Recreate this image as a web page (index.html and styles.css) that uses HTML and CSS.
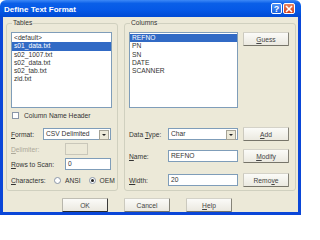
FILE: index.html
```html
<!DOCTYPE html>
<html lang="en">
<head>
    <meta charset="UTF-8">
    <title>Define Text Format</title>
    <link rel="stylesheet" href="styles.css">
</head>
<body>
    <div class="window">
        <div class="titlebar">
            <span class="title">Define Text Format</span>
            <div class="tb-buttons">
                <span class="tb-btn help">?</span>
                <span class="tb-btn close">
                    <svg width="8" height="8" viewBox="0 0 8 8"><path d="M1 1 L7 7 M7 1 L1 7" stroke="#fff" stroke-width="1.6"/></svg>
                </span>
            </div>
        </div>
        <div class="client">
            <div class="groups">
                <fieldset class="group tables">
                    <legend>Tables</legend>
                    <ul class="listbox">
                        <li>&lt;default&gt;</li>
                        <li class="sel">s01_data.txt</li>
                        <li>s02_1007.txt</li>
                        <li>s02_data.txt</li>
                        <li>s02_tab.txt</li>
                        <li>zid.txt</li>
                    </ul>
                    <div class="check"><span class="box"></span>Column Name Header</div>
                    <div class="row first">
                        <span class="lbl"><u>F</u>ormat:</span>
                        <div class="combo fmt">CSV Delimited<span class="arrow"></span></div>
                    </div>
                    <div class="row">
                        <span class="lbl off"><u>D</u>elimiter:</span>
                        <div class="input delim"></div>
                    </div>
                    <div class="row">
                        <span class="lbl"><u>R</u>ows to Scan:</span>
                        <div class="input rows">0</div>
                    </div>
                    <div class="row chars">
                        <span class="lbl"><u>C</u>haracters:</span>
                        <span class="radio"></span><span class="rtext">ANSI</span>
                        <span class="radio on"></span><span class="rtext">OEM</span>
                    </div>
                </fieldset>
                <fieldset class="group columns">
                    <legend>Columns</legend>
                    <div class="rrow top">
                        <ul class="listbox cols">
                            <li class="sel">REFNO</li>
                            <li>PN</li>
                            <li>SN</li>
                            <li>DATE</li>
                            <li>SCANNER</li>
                        </ul>
                        <button class="button"><u>G</u>uess</button>
                    </div>
                    <div class="rrow dtype">
                        <span class="lbl">Data <u>T</u>ype:</span>
                        <div class="combo wide">Char<span class="arrow"></span></div>
                        <button class="button"><u>A</u>dd</button>
                    </div>
                    <div class="rrow name">
                        <span class="lbl"><u>N</u>ame:</span>
                        <div class="input wide">REFNO</div>
                        <button class="button"><u>M</u>odify</button>
                    </div>
                    <div class="rrow width">
                        <span class="lbl"><u>W</u>idth:</span>
                        <div class="input wide">20</div>
                        <button class="button">Remo<u>v</u>e</button>
                    </div>
                </fieldset>
            </div>
            <div class="buttons">
                <button class="button default">OK</button>
                <button class="button">Cancel</button>
                <button class="button"><u>H</u>elp</button>
            </div>
        </div>
    </div>
</body>
</html>
```

FILE: styles.css
```css
body {
    margin: 0;
    background: #ffffff;
    font-family: "Liberation Sans", Arial, sans-serif;
    font-size: 6.7px;
    color: #333;
}

.window {
    width: 301px;
}

.titlebar {
    height: 17px;
    display: flex;
    align-items: center;
    justify-content: space-between;
    padding: 0 6px 0 4px;
    border-radius: 6px 6px 0 0;
    background: linear-gradient(#3d89f7, #0a5fe8 20%, #0558e6 60%, #004ad4);
}

.title {
    color: #fff;
    font-weight: bold;
    font-size: 8px;
    padding-top: 1px;
}

.tb-buttons {
    display: flex;
    gap: 1px;
}

.tb-btn {
    width: 11px;
    height: 11px;
    box-sizing: border-box;
    border: 1px solid #fff;
    border-radius: 2px;
    display: flex;
    align-items: center;
    justify-content: center;
    color: #fff;
    font-weight: bold;
    font-size: 9px;
}

.tb-btn.help {
    background: linear-gradient(#4d93f8, #1b62e0);
}

.tb-btn.close {
    width: 12px;
    background: linear-gradient(#e8825e, #d2401c);
}

.client {
    height: 195px;
    background: #ece9d8;
    border: 3px solid #0a46d8;
    border-top: none;
}

.groups {
    display: flex;
    gap: 6px;
    padding: 2px 2px 0 3px;
    height: 172px;
}

.group {
    margin: 0;
    padding: 0 4px;
    border: 1px solid #d0d0bf;
    border-radius: 3px;
    box-sizing: border-box;
    min-width: 0;
    height: 172px;
}

.group legend {
    padding: 0 1px;
    margin-left: 1px;
    line-height: 8px;
}

.tables {
    width: 112px;
}

.columns {
    width: 172px;
}

.listbox {
    list-style: none;
    margin: 5px 0 0 0;
    padding: 1px 0 0 0;
    width: 101px;
    height: 76px;
    box-sizing: border-box;
    background: #fff;
    border: 1px solid #7f9db9;
}

.listbox li {
    line-height: 8.3px;
    padding-left: 2px;
}

.listbox li.sel {
    background: #316ac5;
    color: #fff;
}

.check {
    display: flex;
    align-items: center;
    gap: 5px;
    margin-top: 3px;
    height: 8px;
    padding-left: 1px;
}

.box {
    width: 5px;
    height: 5px;
    border: 1px solid #8a96a8;
    background: #fff;
}

.row {
    display: flex;
    align-items: center;
    height: 12px;
    margin-top: 3px;
}

.row .lbl {
    width: 54px;
    flex-shrink: 0;
}

.row.first {
    margin-top: 9px;
}

.row.first .lbl {
    width: 32px;
}

.lbl.off {
    color: #aca899;
}

.input, .combo {
    height: 12px;
    box-sizing: border-box;
    background: #fff;
    border: 1px solid #7f9db9;
    padding-left: 2px;
    line-height: 10px;
    position: relative;
    flex-shrink: 0;
}

.input.delim {
    width: 23px;
    background: #ece9d8;
    border-color: #c9c7ba;
}

.input.rows {
    width: 46px;
}

.combo.fmt {
    width: 68px;
}

.arrow {
    position: absolute;
    right: 1px;
    top: 1px;
    width: 8px;
    height: 8px;
    background: #ece9d8;
    border: 1px solid #a5a396;
}

.arrow::after {
    content: "";
    position: absolute;
    left: 2px;
    top: 3px;
    border-left: 2px solid transparent;
    border-right: 2px solid transparent;
    border-top: 2px solid #222;
}

.row.chars {
    height: 8px;
    margin-top: 6px;
}

.row.chars .lbl {
    width: 43px;
}

.radio {
    width: 5px;
    height: 5px;
    flex-shrink: 0;
    border: 1px solid #8a96a8;
    border-radius: 50%;
    background: #fff;
    position: relative;
    margin-right: 4px;
}

.radio.on::after {
    content: "";
    position: absolute;
    left: 1px;
    top: 1px;
    width: 3px;
    height: 3px;
    border-radius: 50%;
    background: #222;
}

.rtext {
    margin-right: 8px;
}

.rrow {
    display: flex;
    align-items: center;
    gap: 5px;
}

.rrow.top {
    margin-top: 5px;
    align-items: flex-start;
}

.listbox.cols {
    margin: 0;
    width: 109px;
    height: 76px;
}

.rrow .lbl {
    width: 34px;
    flex-shrink: 0;
}

.combo.wide, .input.wide {
    width: 70px;
}

.rrow.dtype {
    margin-top: 19px;
}

.rrow.name {
    margin-top: 8px;
}

.rrow.width {
    margin-top: 10px;
}

.button {
    width: 46px;
    height: 14px;
    padding: 0;
    flex-shrink: 0;
    font: inherit;
    color: #444;
    border: 1px solid;
    border-color: #d4d2c8 #858378 #767469 #cbc9be;
    border-radius: 1px;
    background: linear-gradient(#fbfbf8, #ebe9e0);
}

.button.default {
    border-color: #c0beb4 #3a3a3a #2a2a2a #b8b6ac;
}

.buttons {
    display: flex;
    gap: 16px;
    margin-top: 7px;
    padding-left: 59px;
}
```
